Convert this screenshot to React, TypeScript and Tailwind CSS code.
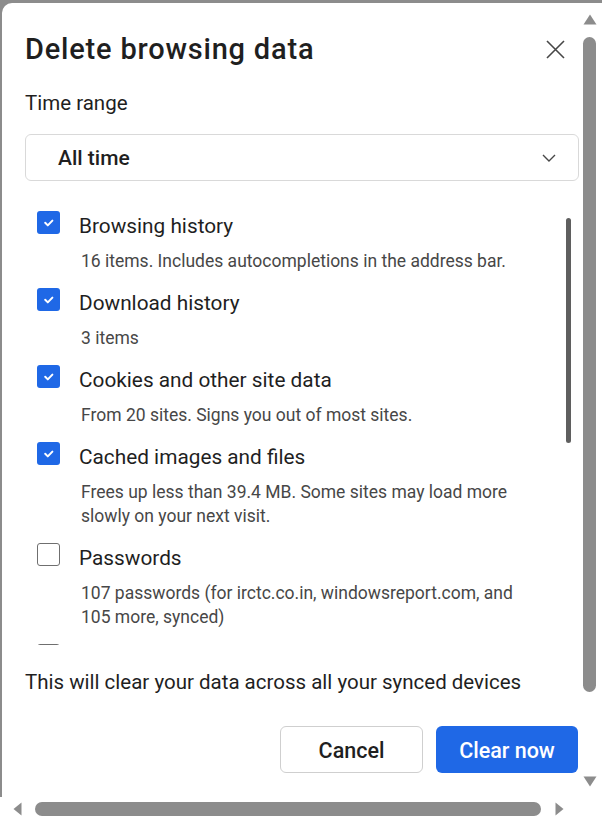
import React from "react";

type Item = { label: string; desc: string[]; checked: boolean };

const items: Item[] = [
  { label: "Browsing history", desc: ["16 items. Includes autocompletions in the address bar."], checked: true },
  { label: "Download history", desc: ["3 items"], checked: true },
  { label: "Cookies and other site data", desc: ["From 20 sites. Signs you out of most sites."], checked: true },
  {
    label: "Cached images and files",
    desc: ["Frees up less than 39.4 MB. Some sites may load more", "slowly on your next visit."],
    checked: true,
  },
  {
    label: "Passwords",
    desc: ["107 passwords (for irctc.co.in, windowsreport.com, and", "105 more, synced)"],
    checked: false,
  },
];

function Checkbox({ checked }: { checked: boolean }) {
  if (checked) {
    return (
      <div className="w-[23px] h-[23px] shrink-0 rounded-[3px] bg-[#1f68e6] flex items-center justify-center">
        <svg width="23" height="23" viewBox="0 0 23 23" fill="none">
          <path d="M8.2 11.8l2.6 2.6 4.6-4.8" stroke="white" strokeWidth="2" strokeLinecap="round" strokeLinejoin="round" />
        </svg>
      </div>
    );
  }
  return <div className="w-[23px] h-[23px] shrink-0 rounded-[3px] border-[1.5px] border-[#6f6f6f] bg-white" />;
}

function Row({ item }: { item: Item }) {
  return (
    <div className="flex flex-col">
      <div className="flex items-start h-[28px]">
        <Checkbox checked={item.checked} />
        <span className="ml-[19px] mt-[1px] text-[20.8px] leading-[28px] text-[#1f1f1f] whitespace-nowrap">{item.label}</span>
      </div>
      <div className="mt-[10px] ml-[44px] text-[17.5px] leading-[24px] text-[#474747] whitespace-nowrap">
        {item.desc.map((d, i) => (
          <div key={i}>{d}</div>
        ))}
      </div>
    </div>
  );
}

export default function App() {
  return (
    <div className="w-[602px] h-[821px] overflow-hidden bg-[#8c8c8c] pt-[3px] flex flex-col font-['Roboto',sans-serif]">
      <div className="flex h-[794px]">
        <div className="ml-[2px] w-[578px] bg-white rounded-tl-[10px] overflow-hidden pl-[23px] flex flex-col">
          <div className="flex items-center justify-between mt-[29px] h-[34px] pr-[15px]">
            <h1 className="text-[29px] leading-[34px] tracking-[0.8px] font-medium text-[#1f1f1f] whitespace-nowrap">
              Delete browsing data
            </h1>
            <svg width="19" height="19" viewBox="0 0 19 19" fill="none">
              <path d="M1 1l17 17M18 1L1 18" stroke="#474747" strokeWidth="1.6" />
            </svg>
          </div>
          <div className="mt-[24px] text-[20.5px] leading-[26px] text-[#1f1f1f]">Time range</div>
          <div className="mt-[18px] w-[554px] h-[47px] shrink-0 border border-[#d9d9d9] rounded-[6px] flex items-center justify-between pl-[32px] pr-[22px]">
            <span className="pt-[3px] text-[21px] font-medium text-[#1f1f1f]">All time</span>
            <svg width="14" height="8" viewBox="0 0 14 8" fill="none">
              <path d="M1 1l6 6 6-6" stroke="#474747" strokeWidth="1.4" />
            </svg>
          </div>
          <div className="relative mt-[14px] h-[450px] shrink-0 overflow-hidden">
            <div className="pt-[16px] pl-[12px] flex flex-col gap-[15px]">
              {items.map((it) => (
                <Row key={it.label} item={it} />
              ))}
              <Checkbox checked={false} />
            </div>
            <div className="absolute top-[23px] left-[541px] w-[5px] h-[225px] rounded-full bg-[#5f5f5f]" />
          </div>
          <div className="mt-[24px] text-[20.5px] leading-[26px] text-[#1f1f1f] whitespace-nowrap">
            This will clear your data across all your synced devices
          </div>
          <div className="mt-[31px] flex justify-end gap-[13px] pr-[2px]">
            <button className="w-[143px] h-[47px] pt-[4px] rounded-[6px] border border-[#cfcfcf] bg-white text-[21.5px] font-medium text-[#1f1f1f]">
              Cancel
            </button>
            <button className="w-[142px] h-[47px] pt-[4px] rounded-[6px] bg-[#1f68e6] text-[21.5px] font-medium text-white">
              Clear now
            </button>
          </div>
        </div>
        <div className="w-[22px] bg-white flex flex-col pl-[3px]">
          <svg className="mt-[11px]" width="14" height="11" viewBox="0 0 14 11">
            <path d="M7 0.5L13.5 10.5H0.5Z" fill="#8c8c8c" />
          </svg>
          <div className="mt-[12px] w-[13px] h-[655px] rounded-full bg-[#8c8c8c]" />
          <svg className="mt-[84px]" width="14" height="11" viewBox="0 0 14 11">
            <path d="M7 10.5L13.5 0.5H0.5Z" fill="#8c8c8c" />
          </svg>
        </div>
      </div>
      <div className="h-[24px] bg-white flex items-center">
        <svg className="ml-[13px]" width="9" height="14" viewBox="0 0 9 14">
          <path d="M0.5 7L8.5 0.5V13.5Z" fill="#8c8c8c" />
        </svg>
        <div className="ml-[13px] w-[506px] h-[14px] rounded-full bg-[#8c8c8c]" />
        <svg className="ml-[14px]" width="9" height="14" viewBox="0 0 9 14">
          <path d="M8.5 7L0.5 0.5V13.5Z" fill="#8c8c8c" />
        </svg>
      </div>
    </div>
  );
}
